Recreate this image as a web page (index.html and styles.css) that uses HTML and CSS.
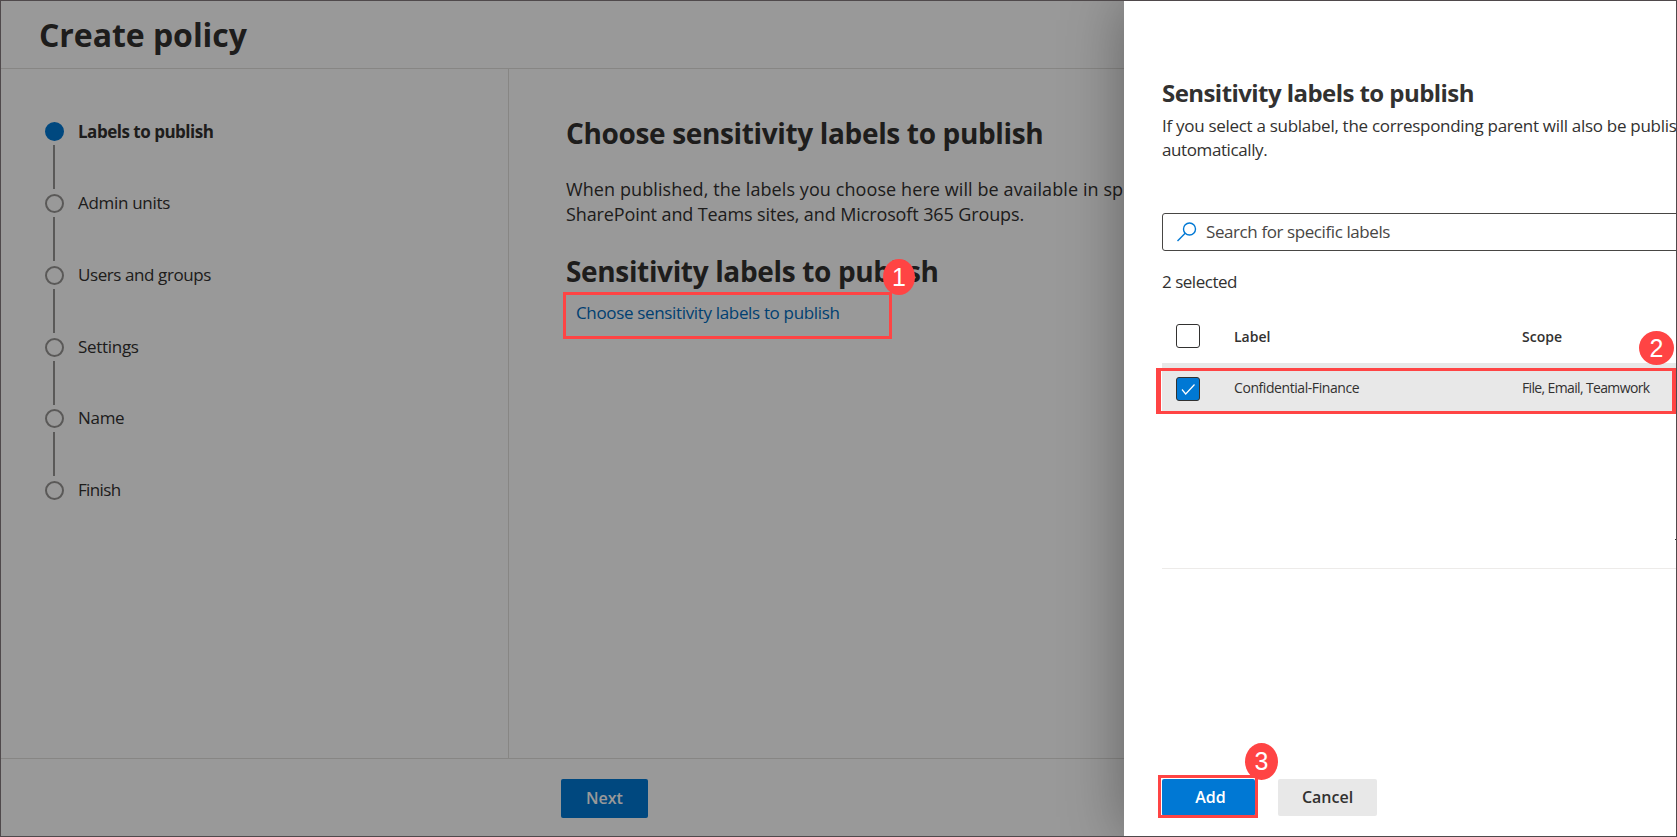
FILE: index.html
```
<!DOCTYPE html>
<html lang="en">
<head>
<meta charset="utf-8">
<title>Create policy</title>
<link rel="stylesheet" href="styles.css">
</head>
<body>
<div class="app">
  <div class="page">
    <header class="page-header"><h1 class="page-title">Create policy</h1></header>
    <div class="page-body">
      <nav class="steps">
        <div class="step current"><i class="dot"></i><span>Labels to publish</span></div>
        <div class="step"><i class="dot"></i><span>Admin units</span></div>
        <div class="step users"><i class="dot"></i><span>Users and groups</span></div>
        <div class="step"><i class="dot"></i><span>Settings</span></div>
        <div class="step"><i class="dot"></i><span>Name</span></div>
        <div class="step finish"><i class="dot"></i><span>Finish</span></div>
      </nav>
      <main class="content">
        <h2 class="heading">Choose sensitivity labels to publish</h2>
        <p class="intro"><span class="intro-first">When published, the labels you choose here will be available in sp</span><br>SharePoint and Teams sites, and Microsoft 365 Groups.</p>
        <h2 class="heading sub">Sensitivity labels to publish</h2>
        <a class="link">Choose sensitivity labels to publish</a>
      </main>
    </div>
    <footer class="page-footer"><button class="btn next">Next</button></footer>
  </div>
  <aside class="panel">
    <h2 class="panel-title">Sensitivity labels to publish</h2>
    <p class="panel-text">If you select a sublabel, the corresponding parent will also be publis<br><span class="panel-text-last">automatically.</span></p>
    <div class="search">
      <svg class="search-icon" width="20" height="20" viewBox="0 0 20 20"><circle cx="12.5" cy="7" r="6"/><path d="M8.2 11.3 .5 19"/></svg>
      <span>Search for specific labels</span>
    </div>
    <div class="count">2 selected</div>
    <div class="row head"><i class="check"></i><span>Label</span><span>Scope</span></div>
    <div class="row selected"><i class="check on"><svg width="22" height="22" viewBox="0 0 22 22"><path d="M5 11.5 8.7 16 17.5 6.5"/></svg></i><span class="name">Confidential-Finance</span><span class="scope">File, Email, Teamwork</span></div>
    <div class="divider"></div>
    <div class="actions"><button class="btn add">Add</button><button class="btn cancel">Cancel</button></div>
  </aside>
  <div class="mark mark-link"></div><div class="badge badge-1">1</div>
  <div class="mark mark-row"></div><div class="badge badge-2">2</div>
  <div class="mark mark-add"></div><div class="badge badge-3">3</div>
  <div class="edge-tick"></div>
  <div class="frame"></div>
</div>
</body>
</html>
```
FILE: styles.css
```
* { box-sizing: border-box; }
body { margin: 0; font-family: "Open Sans", "Noto Sans", sans-serif; color: #323130; overflow: hidden; }
h1, h2, p { margin: 0; }
.app { position: relative; width: 1677px; height: 837px; overflow: hidden; display: flex; background: #fff; }
.page { position: relative; width: 1124px; flex: none; display: flex; flex-direction: column; white-space: nowrap; overflow: hidden; }
.page::after { content: ""; position: absolute; inset: 0; background: rgba(0, 0, 0, .4); }
.page-header { height: 69px; flex: none; padding-left: 39px; border-bottom: 1px solid #e1dfdd; }
.page-title { padding-top: 1px; font-size: 32px; line-height: 68px; letter-spacing: -.05px; }
.page-body { flex: 1; display: flex; }
.steps { width: 508px; padding: 53px 0 0 45px; }
.step { position: relative; height: 71.85px; display: flex; align-items: flex-start; gap: 14px; font-size: 17px; line-height: 17px; letter-spacing: -.3px; }
.step:not(:last-child)::after { content: ""; position: absolute; left: 8px; top: 23px; width: 2px; height: 44px; background: #979593; }
.dot { width: 19px; height: 19px; border: 2px solid #979593; border-radius: 50%; }
.current { font-weight: 700; line-height: 19px; letter-spacing: -.49px; }
.current .dot { background: #0078d4; border-color: #0078d4; }
.users { letter-spacing: -.41px; }
.finish { letter-spacing: -.65px; }
.content { flex: 1; padding: 44px 0 0 57px; border-left: 1px solid #e1dfdd; overflow: hidden; }
.heading { font-size: 28px; line-height: 40px; letter-spacing: -.35px; }
.intro { margin-top: 24px; font-size: 18px; line-height: 25px; letter-spacing: -.11px; }
.intro-first { letter-spacing: .09px; }
.sub { margin-top: 24px; }
.link { display: block; margin: 10px 0 0 10px; font-size: 17px; line-height: 24px; letter-spacing: -.34px; color: #006cbe; }
.page-footer { height: 79px; flex: none; padding: 20px 0 0 561px; border-top: 1px solid #e1dfdd; }
.btn { border: 0; padding: 0 0 2px; border-radius: 2px; font-family: inherit; font-size: 16px; font-weight: 600; color: #fff; background: #0078d4; }
.next { width: 87px; height: 39px; }
.panel { position: relative; width: 553px; flex: none; padding: 77px 0 0 38px; background: #fff; box-shadow: 0 0 56px rgba(0, 0, 0, .35); white-space: nowrap; }
.panel-title { font-size: 24px; line-height: 32px; letter-spacing: -.56px; }
.panel-text { margin-top: 5px; font-size: 17px; line-height: 24px; letter-spacing: -.29px; }
.panel-text-last { letter-spacing: -.4px; }
.search { height: 38px; margin: 51px -4px 0 0; padding: 0 0 1px 14px; display: flex; align-items: center; gap: 9px; border: 1px solid #484644; border-radius: 3px; font-size: 17px; letter-spacing: -.41px; color: #484644; }
.search-icon { fill: none; stroke: #0078d4; stroke-width: 1.4; }
.count { margin-top: 19px; font-size: 17px; line-height: 24px; letter-spacing: -.48px; }
.row { display: grid; grid-template-columns: 58px 288px 1fr; align-items: center; padding-left: 14px; font-size: 14px; }
.head { height: 54px; margin-top: 15px; font-weight: 600; }
.selected { height: 50px; padding-top: 2px; background: #e8e8e8; }
.name, .scope { padding-bottom: 4px; letter-spacing: -.43px; }
.scope { letter-spacing: -.64px; }
.check { width: 24px; height: 24px; border: 1px solid #323130; border-radius: 3px; }
.on { background: #0078d4; }
.on svg { display: block; fill: none; stroke: #fff; stroke-width: 1.2; }
.divider { margin-top: 155px; height: 1px; background: #edebe9; }
.actions { display: flex; gap: 23px; margin-top: 210px; }
.add { width: 93px; height: 37px; padding-left: 4px; }
.cancel { width: 99px; height: 37px; color: #323130; background: #e8e8e8; }
.mark { position: absolute; border: 3px solid #ff4444; }
.mark-link { left: 563px; top: 292px; width: 329px; height: 47px; }
.mark-row { left: 1156px; top: 368px; width: 520px; height: 46px; border-width: 3px 4px 3px 5px; }
.mark-add { left: 1158px; top: 775px; width: 100px; height: 43px; }
.badge { position: absolute; display: flex; align-items: center; justify-content: center; border-radius: 50%; background: #ff4444; color: #fff; font: 25px "Liberation Sans", sans-serif; }
.badge-1 { left: 883px; top: 259px; width: 32px; height: 36px; }
.badge-2 { left: 1639px; top: 331px; width: 35px; height: 34px; }
.badge-3 { left: 1245px; top: 743px; width: 33px; height: 37px; }
.edge-tick { position: absolute; left: 1675px; top: 539px; width: 1px; height: 1px; background: #323130; }
.frame { position: absolute; inset: 0; border: 1px solid #4f494b; }
```
